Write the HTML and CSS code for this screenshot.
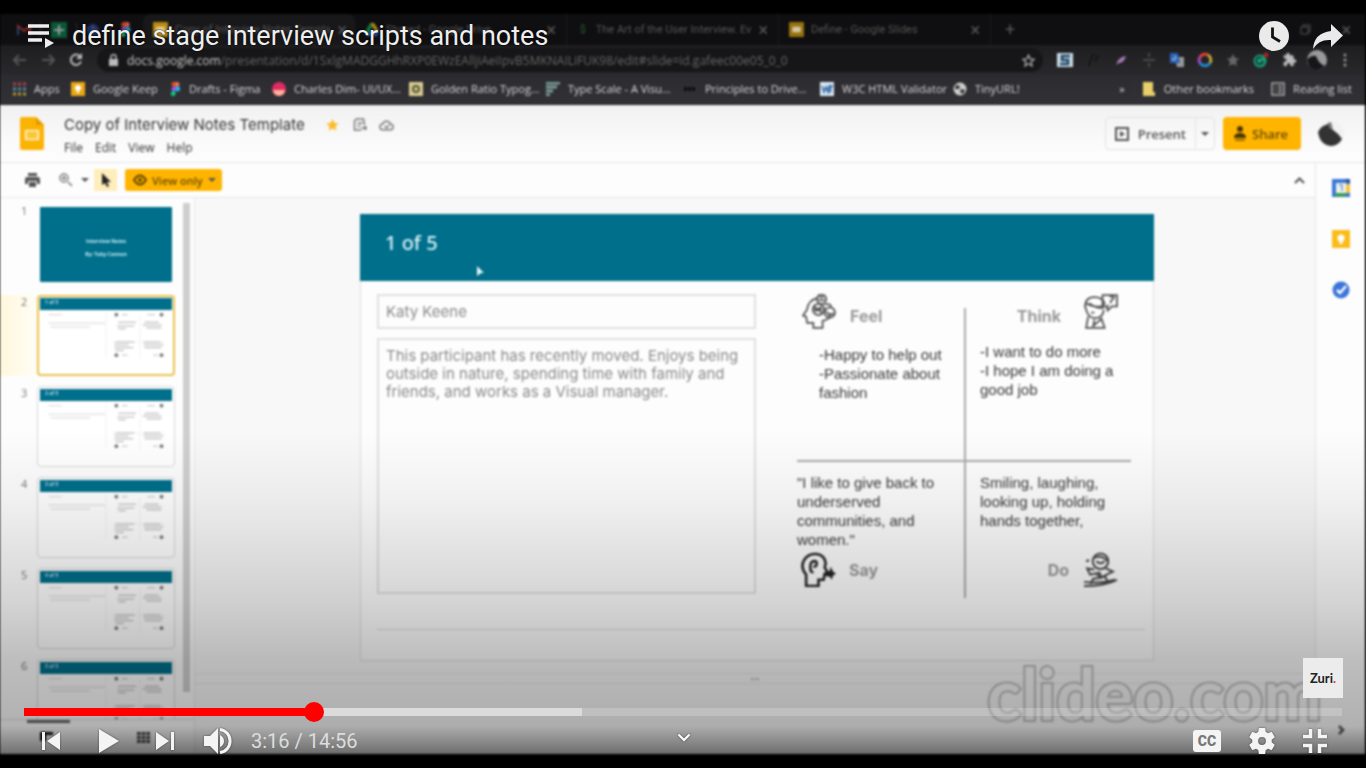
FILE: index.html
```html
<!DOCTYPE html>
<html lang="en">
<head>
<meta charset="utf-8">
<title>define stage interview scripts and notes</title>
<link rel="stylesheet" href="styles.css">
</head>
<body>
<svg class="defs" aria-hidden="true">
  <symbol id="mini" viewBox="0 0 132 68">
    <g fill="none" stroke="#bbb" stroke-width="1">
      <path d="M5 5h14" stroke="#dccfd3"/><path d="M5 14h60M7 18h42" stroke="#d4d4d4"/>
      <path d="M66 3v46M72 34h56M102 6v46" stroke="#f1f1f1"/>
      <path d="M83 5h6M110 5h8M83 48h6M116 48h5" stroke="#bbb"/>
      <path d="M79 13h19M78 17h18M79 20h8M107 13h15M105 16h20M109 19h16M76 34h20M75 37h15M75 40h20M76 43h9M106 34h18M106 37h21M107 40h18" stroke="#aaa"/>
    </g>
    <g fill="#777"><circle cx="77" cy="5" r="2"/><circle cx="125" cy="5" r="2"/><circle cx="77" cy="48" r="2"/><circle cx="125" cy="48" r="2"/></g>
  </symbol>
  <symbol id="slides" viewBox="0 0 16 16"><rect width="16" height="16" rx="1" fill="currentColor"/><path d="M3.500 5h9v6h-9z" fill="#fff" opacity=".6"/></symbol>
  <symbol id="figma" viewBox="0 0 10 14"><path d="M5 0H3a2.400 2.400 0 0 0 0 4.700h2z" fill="#f24e1e"/><path d="M5 0h2a2.400 2.400 0 0 1 0 4.700H5z" fill="#ff7262"/><path d="M5 4.700H3a2.400 2.400 0 0 0 0 4.700h2z" fill="#a259ff"/><circle cx="7.300" cy="7" r="2.400" fill="#1abcfe"/><path d="M5 9.400H3A2.300 2.300 0 1 0 5 12z" fill="#0acf83"/></symbol>
</svg>

<main class="player">
  <div class="video">
    <div class="tabs">
      <div class="pins">
        <svg width="14" height="12" viewBox="0 0 14 12"><path d="M1 11V2l6 5 6-5v9" fill="none" stroke="#a33" stroke-width="2"/><path d="M1 11V4" stroke="#258" stroke-width="2"/></svg>
        <i class="sep"></i>
        <svg width="16" height="16" viewBox="0 0 16 16"><path fill="#0b6a41" d="M0 0h16v16H0z"/><path d="M8 3v10M3 8h10" stroke="#bbb" stroke-width="2"/></svg>
        <i class="sep"></i>
        <svg width="14" height="14" viewBox="0 0 14 14"><circle cx="7" cy="7" r="6" fill="#1a3b86"/><path d="M7 2v5h4" stroke="#a66" fill="none"/></svg>
        <i class="sep"></i>
        <svg width="11" height="15"><use href="#figma"/></svg>
      </div>
      <div class="tab active"><svg class="c-slides" width="15" height="15"><use href="#slides"/></svg><span>Copy of Interview Notes Templa</span><b>×</b></div>
      <div class="tab"><svg width="14" height="13" viewBox="0 0 14 13"><path d="M5 0h4l5 8h-4z" fill="#b58a12"/><path d="M5 0l2 4-5 9-2-4z" fill="#0c7b43"/><path d="M4 8h10l-2 5H2z" fill="#2458b5"/></svg><span>Shared - Google Drive</span><b>×</b></div>
      <div class="tab"><em>$</em><span>The Art of the User Interview. Ev</span><b>×</b></div>
      <div class="tab"><svg class="c-dim" width="15" height="15"><use href="#slides"/></svg><span>Define - Google Slides</span><b>×</b></div>
      <span class="newtab">+</span>
      <div class="win"><span>–</span><svg width="11" height="11" viewBox="0 0 11 11"><path d="M1 3h7v7H1zM3 3V1h7v7H8" fill="none" stroke="#555"/></svg><span>×</span></div>
    </div>

    <div class="address">
      <svg width="14" height="12" viewBox="0 0 14 12"><path d="M13 6H2M6 1L1 6l5 5" fill="none" stroke="#555" stroke-width="2"/></svg>
      <svg width="14" height="12" viewBox="0 0 14 12"><path d="M1 6h11M8 1l5 5-5 5" fill="none" stroke="#555" stroke-width="2"/></svg>
      <svg width="14" height="14" viewBox="0 0 14 14"><path d="M11.500 4A5.200 5.200 0 1 0 12 8.500" fill="none" stroke="#bbb" stroke-width="2"/><path d="M13 0v6H7z" fill="#bbb"/></svg>
      <div class="url">
        <svg width="9" height="12" viewBox="0 0 9 12"><path d="M0 5h9v7H0z" fill="#bbb"/><path d="M2 5V3a2.500 2.500 0 0 1 5 0v2" fill="none" stroke="#bbb" stroke-width="1.500"/></svg>
        <span><strong>docs.google.com</strong>/presentation/d/1SxlgMADGGHhRXP0EWzEAlljiAeiIpvB5MKNAILiFUK98/edit#slide=id.gafeec00e05_0_0</span>
        <svg width="13" height="13" viewBox="0 0 24 24"><path d="M12 2l3 7 7.500.700-5.700 5 1.700 7.300L12 18l-6.500 4 1.700-7.300-5.700-5L9 9z" fill="none" stroke="#aaa" stroke-width="2.500"/></svg>
      </div>
      <div class="exts">
        <svg viewBox="0 0 16 16"><path fill="#c9dce4" d="M0 1h16v14H0z"/><path d="M13 4H5v4h6v4H3" fill="none" stroke="#246" stroke-width="2.500"/></svg>
        <svg viewBox="0 0 16 16"><path d="M4 14L7 4q1-2 3-1M10 10l2-5 2-1" fill="none" stroke="#111" stroke-width="1.500"/></svg>
        <svg viewBox="0 0 16 16"><path d="M3 13Q5 5 13 4q-2 7-7 7z" fill="#a77bb4"/></svg>
        <svg viewBox="0 0 16 16"><path d="M8 1v4M8 11v4M2 8h12" stroke="#555" stroke-width="1.500"/></svg>
        <svg viewBox="0 0 16 16"><path fill="#999" d="M6 5h9v10H8z"/><path fill="#2861b5" d="M1 1h8l2 10H1z"/><path d="M3 6a2 2 0 1 0 2-2" stroke="#cde" fill="none"/></svg>
        <svg viewBox="0 0 16 16"><g fill="none" stroke-width="3"><path d="M3 11a6 6 0 0 1 0-6" stroke="#a4c"/><path d="M3 5a6 6 0 0 1 8-2" stroke="#e43"/><path d="M11 3a6 6 0 0 1 2 8" stroke="#ca3"/><path d="M13 11a6 6 0 0 1-10 0" stroke="#28c"/></g></svg>
        <svg viewBox="0 0 16 16"><path d="M8 2l2 4 4 .500-3 3 1 4.500-4-2-4 2 1-4.500-3-3L6 6z" fill="#666"/></svg>
        <svg viewBox="0 0 16 16"><circle cx="7" cy="9" r="6.500" fill="#16a377"/><path d="M9 6a3.500 3.500 0 1 0 1 4H8" stroke="#223" stroke-width="1.500" fill="none"/><circle cx="13" cy="3" r="2.500" fill="#a22"/></svg>
        <svg viewBox="0 0 24 24"><path d="M20.500 11H19V7a2 2 0 0 0-2-2h-4V3.500a2.500 2.500 0 0 0-5 0V5H4v4.300h1.500a2.700 2.700 0 0 1 0 5.400H4V21h5v-2a2.500 2.500 0 0 1 5 0v2h5v-5h1.500a2.500 2.500 0 0 0 0-5z" fill="#bbb"/></svg>
        <svg class="big" viewBox="0 0 20 20"><circle cx="10" cy="10" r="10" fill="#999"/><path d="M0 10q4-5 9-4 3 8 9 10-9 8-16 0z" fill="#16161a"/></svg>
        <svg viewBox="0 0 16 16"><g fill="#999"><circle cx="8" cy="3" r="1.500"/><circle cx="8" cy="8" r="1.500"/><circle cx="8" cy="13" r="1.500"/></g></svg>
      </div>
    </div>

    <div class="bookmarks">
      <div><svg viewBox="0 0 14 14"><g stroke-width="3" stroke-dasharray="3 2"><path d="M1 2h13" stroke="#a44"/><path d="M1 7h13" stroke="#58a"/><path d="M1 12h13" stroke="#a93"/></g></svg>Apps</div>
      <div><svg viewBox="0 0 14 14"><path fill="#e9a813" d="M0 0h14v14H0z"/><circle cx="7" cy="6" r="3" fill="#fff"/><path fill="#fff" d="M6 9h2v2H6z"/></svg>Google Keep</div>
      <div><svg class="slim" viewBox="0 0 10 14"><use href="#figma"/></svg>Drafts - Figma</div>
      <div><svg viewBox="0 0 14 14"><circle cx="7" cy="7" r="7" fill="#e22a63"/><path d="M1 8h12a6 6 0 0 1-12 0z" fill="#ffb199"/></svg>Charles Dim- UI/UX…</div>
      <div><svg viewBox="0 0 14 14"><path fill="#d8cb92" d="M0 0h14v14H0z"/><circle cx="7" cy="7" r="3" fill="none" stroke="#553" stroke-width="2"/></svg>Golden Ratio Typog…</div>
      <div><svg viewBox="0 0 14 14"><path d="M0 1h14M0 5h11M0 9h7M0 13h4" stroke="#7b9a97" stroke-width="3"/></svg>Type Scale - A Visu…</div>
      <div><svg viewBox="0 0 14 14"><path d="M1 7h12" stroke="#0c0c10" stroke-width="4" stroke-dasharray="3 1"/></svg>Principles to Drive…</div>
      <div><svg viewBox="0 0 14 14"><path fill="#dbe7f2" d="M0 0h14v14H0z"/><path d="M2 4l2 6 2-5 2 5 1-6h3l-2 3q2 3-1 3" fill="none" stroke="#2b62a5" stroke-width="1.500"/></svg>W3C HTML Validator</div>
      <div><svg viewBox="0 0 14 14"><circle cx="7" cy="7" r="6.500" fill="#ccc"/><path d="M3 3l4 1-1 3-4 0M8 7l4 1-2 4-3-2z" fill="#333"/></svg>TinyURL!</div>
      <div class="end"><span>»</span><i class="sep"></i><svg viewBox="0 0 14 14"><path fill="#e8cf6a" d="M1 0h10v10h2v4H1z"/></svg>Other bookmarks<i class="sep"></i><svg viewBox="0 0 14 14"><path d="M1 1h12v12H1zM4 4h1M7 4h4M4 7h1M7 7h4M4 10h1M7 10h4" fill="none" stroke="#aaa" stroke-width="1.500"/></svg>Reading list</div>
    </div>

    <header class="dochead">
      <svg class="logo" viewBox="0 0 24 33"><path d="M2 0h14l8 8v23a2 2 0 0 1-2 2H2a2 2 0 0 1-2-2V2a2 2 0 0 1 2-2z" fill="#fbb303"/><path d="M16 0l8 8h-8z" fill="#e69a00"/><path d="M6 14h12v8H6z" fill="none" stroke="#ffe9a8" stroke-width="2.500"/><path d="M8 17h8v2H8z" fill="#fcd264"/></svg>
      <div class="names">
        <div class="doctitle"><span>Copy of Interview Notes Template</span>
          <svg viewBox="0 0 14 14"><path d="M7 1l2 4 4 .500-3 3 .800 4L7 10.500 3.200 12.500l.800-4-3-3L5 5z" fill="#f9bd2c"/></svg>
          <svg viewBox="0 0 14 14"><path d="M9 12H2V3l2-2h7l1 6M5 5h5M5 8h3M9 10h5M12 8l2 2-2 2" fill="none" stroke="#777" stroke-width="1.500"/></svg>
          <svg viewBox="0 0 16 14"><path d="M4 12a3 3 0 0 1 0-6q1-3 4-3t4 3a3 3 0 0 1 0 6zM6 8l2 2 3-3" fill="none" stroke="#777" stroke-width="1.500"/></svg>
        </div>
        <nav class="menu"><button>File</button><button>Edit</button><button>View</button><button>Help</button></nav>
      </div>
      <div class="present"><button><svg width="14" height="14" viewBox="0 0 14 14"><path d="M1 1h12v12H1z" fill="none" stroke="#555" stroke-width="2"/><path d="M5 4l5 3-5 3z" fill="#555"/></svg>Present</button><button class="drop" aria-label="Present options"><i class="caret"></i></button></div>
      <button class="share"><svg width="12" height="15" viewBox="0 0 12 15"><circle cx="6" cy="3" r="3" fill="#4a3500"/><path d="M0 12q0-5 6-5t6 5z" fill="#4a3500"/><path d="M1 14h10" stroke="#7c5800" stroke-width="1.500"/></svg>Share</button>
      <svg class="avatar" viewBox="0 0 28 28"><circle cx="14" cy="14" r="13" fill="#f1f1f1"/><path d="M1 12q3-6 8-7l3-2q0 5 4 7 5 3 9 9-4 7-11 7Q3 25 1 12z" fill="#333"/><path d="M11 3l3-1 2 8-4-2z" fill="#777"/></svg>
    </header>

    <div class="work">
      <section class="editor">
        <div class="toolbar">
          <svg width="15" height="14" viewBox="0 0 15 14"><path d="M3 0h9v3H3zM2 4h11q2 0 2 2v5h-3V8H3v3H0V6q0-2 2-2zM4 9h7v5H4z" fill="#555"/></svg>
          <svg class="mag" width="14" height="14" viewBox="0 0 14 14"><path d="M9 9l4 4M3 5h4M5 3v4" stroke="#777" stroke-width="1.500"/><circle cx="5" cy="5" r="4" fill="none" stroke="#777" stroke-width="1.500"/></svg>
          <i class="caret"></i>
          <span class="pick"><svg width="10" height="14" viewBox="0 0 10 14"><path d="M1 0l9 9H6l2 4-2 1-2-4-3 2z" fill="#222"/></svg></span>
          <button class="viewonly"><svg width="14" height="12" viewBox="0 0 14 12"><path d="M1 6q6-9 12 0-6 9-12 0z" fill="none" stroke="#5c4200" stroke-width="2"/><circle cx="7" cy="6" r="2" fill="#5c4200"/></svg>View only<i class="caret"></i></button>
          <svg class="fold" width="11" height="7" viewBox="0 0 11 7"><path d="M1 6l4.500-4.500L10 6" fill="none" stroke="#555" stroke-width="2"/></svg>
        </div>
        <div class="panes">
          <aside class="film">
            <div class="filmlist">
              <ol>
                <li><span>1</span><div class="thumb cover"><p>Interview Notes</p><p>By: Toby Cannon</p></div></li>
                <li class="sel"><span>2</span><div class="thumb"><b>1 of 5</b><svg><use href="#mini"/></svg></div></li>
                <li><span>3</span><div class="thumb"><b>2 of 5</b><svg><use href="#mini"/></svg></div></li>
                <li><span>4</span><div class="thumb"><b>3 of 5</b><svg><use href="#mini"/></svg></div></li>
                <li><span>5</span><div class="thumb"><b>4 of 5</b><svg><use href="#mini"/></svg></div></li>
                <li><span>6</span><div class="thumb"><b>5 of 5</b><svg><use href="#mini"/></svg></div></li>
              </ol>
              <div class="scroll"></div>
            </div>
            <div class="filmfoot"><i class="hbar"></i><svg width="13" height="9" viewBox="0 0 13 9"><path d="M0 0h13v3H6v6H0z" fill="#111"/></svg><svg width="13" height="11" viewBox="0 0 13 11"><path d="M0 1.500h13M0 5.500h13M0 9.500h13" stroke="#444" stroke-width="3" stroke-dasharray="3.700 1"/></svg></div>
          </aside>
          <div class="canvas">
            <article class="slide">
              <h1>1 of 5</h1>
              <svg class="pointer" width="9" height="12" viewBox="0 0 9 12"><path d="M1 1l7 7H5l-4 3z" fill="#e6f4f8"/></svg>
              <div class="content">
                <div class="person"><p class="box name">Katy Keene</p><p class="box bio">This participant has recently moved. Enjoys being outside in nature, spending time with family and friends, and works as a Visual manager.</p></div>
                <div class="map">
                  <section class="q feel"><h2><svg viewBox="0 0 34 34"><g fill="none" stroke="#505050" stroke-width="1.700"><path d="M15 4Q6 6 5 15l-4 6 3 1 1 6h6v5h9v-7q7-1 8-7"/><circle cx="19" cy="5" r="4.500"/><path d="M16 6h6M17 3h4"/><circle cx="16" cy="15" r="5.500"/><path d="M12 12l8 7M13 17l6-5M11 15h9"/><circle cx="27" cy="18" r="5"/><path d="M24 17l2 3 5-1M22 10q7-1 6 3"/></g></svg>Feel</h2><p>-Happy to help out<br>-Passionate about fashion</p></section>
                  <section class="q think"><h2>Think<svg viewBox="0 0 34 34"><g fill="none" stroke="#505050" stroke-width="1.700"><path d="M2 13Q2 3 11 3q8 0 10 6l-3 3q-9 1-15-3M2 12l2 6q3 7 11 5 5-2 5-8M6 9q8 6 14 4M5 22l-2 11h18l-3-9-8 7 1-6M8 18h3M22 13l3-2M19 1h14v11h-5l-4 4-1-4h-4zM26 3q4-2 4 1l-3 3v2"/></g></svg></h2><p>-I want to do more<br>-I hope I am doing a good job</p></section>
                  <section class="q say"><p>"I like to give back to underserved communities, and women."</p><h2><svg viewBox="0 0 34 34"><path d="M5 33V22Q-1 15 3 8q4-7 12-6 8 1 9 9l-1 4 3 5-3 1-1 6h-5v6zM15 9q-6-1-6 5 0 7 3 5M15 9q1 6-3 5" fill="none" stroke="#222" stroke-width="2.500"/><path d="M22 23l6-5 1-4 2 5 3 2-3 2-1 4-2-3z" fill="#222"/></svg>Say</h2></section>
                  <section class="q do"><p>Smiling, laughing, looking up, holding hands together,</p><h2>Do<svg viewBox="0 0 34 34"><g fill="none" stroke="#444" stroke-width="1.900"><circle cx="17" cy="9" r="7.500"/><path d="M10 6q8-4 14 3M13 9q4 4 8 0M6 8l-3 1M11 17l-7-1 3 6 9-2 2 5-8 1-3 5M22 16l7 3-8 4 4 8M13 22q7 4 10 0M1 33q20 0 32-6M1 29q17 2 30-2"/></g></svg></h2></section>
                </div>
              </div>
              <hr>
            </article>
            <div class="notes"><span>•••</span></div>
          </div>
        </div>
      </section>
      <aside class="side">
        <svg viewBox="0 0 18 18"><path d="M0 0h18v18H0z" fill="#3b78d8"/><path d="M12 0h6v5z" fill="#1f4fa3"/><path d="M4 4h10v10H4z" fill="#eef4e8"/><path d="M14 5h4v9h-4z" fill="#f6c33c"/><path d="M3 14h11v4H3z" fill="#3a9b62"/><path d="M7 6h3v6" stroke="#6b9be0" stroke-width="1.500" fill="none"/></svg>
        <svg viewBox="0 0 18 18"><path d="M0 0h18v18H0z" fill="#fbbc1a"/><circle cx="9" cy="8" r="3.500" fill="#fff"/><path d="M7.500 11h3v3h-3z" fill="#fff"/></svg>
        <svg viewBox="0 0 18 18"><circle cx="9" cy="9" r="8.500" fill="#3c74d8"/><path d="M5 9l3 3 6-7" fill="none" stroke="#fff" stroke-width="2.500"/></svg>
        <svg class="last" viewBox="0 0 18 18"><path d="M7 5l4 4-4 4" fill="none" stroke="#555" stroke-width="2.500"/></svg>
      </aside>
    </div>
    <div class="mark">clideo.com</div>
  </div>

  <div class="overlay">
    <div class="top">
      <button aria-label="Playlist"><svg width="27" height="25" viewBox="0 0 27 25"><path d="M0 2h21M0 9h21M0 16h14" stroke="#eee" stroke-width="3.500"/><path d="M17 14l9 5-9 5z" fill="#eee"/></svg></button>
      <a href="#">define stage interview scripts and notes</a>
      <button class="later" aria-label="Watch later"><svg width="30" height="30" viewBox="0 0 30 30"><circle cx="15" cy="15" r="15" fill="#eaeaea"/><path d="M13.500 6.500v9.500l7.500 4.500" fill="none" stroke="#111" stroke-width="2.800"/></svg></button>
      <button aria-label="Share"><svg width="30" height="25" viewBox="0 0 30 25"><path d="M18 0l12 11.500L18 23v-7Q6 15 0 25 1 9 18 7z" fill="#eaeaea"/></svg></button>
    </div>
    <a class="brand" href="#">Zuri<b>.</b></a>
    <input class="seek" type="range" min="0" max="896" value="193" aria-label="Seek">
    <div class="controls">
      <div class="left">
        <button aria-label="Previous"><svg width="20" height="20" viewBox="0 0 20 20"><path d="M1 1h3v18H1zM19 1v18L6 10z"/></svg></button>
        <button class="play" aria-label="Play"><svg width="20" height="26" viewBox="0 0 20 26"><path d="M0 1l20 12L0 25z"/></svg></button>
        <button class="next" aria-label="Next"><svg width="20" height="20" viewBox="0 0 20 20"><path d="M1 1v18l13-9zM16 1h3v18h-3z"/></svg></button>
        <button class="vol" aria-label="Volume"><svg width="28" height="28" viewBox="0 0 28 28"><path d="M0 9h6l8-8v26l-8-8H0zM16 8q4 2 4 6t-4 6z"/><path d="M16 2.500a11.600 11.600 0 0 1 0 23" fill="none" stroke="#f4f4f4" stroke-width="3"/></svg></button>
        <span class="time">3:16 / 14:56</span>
      </div>
      <button class="more" aria-label="More videos"><svg width="14" height="9" viewBox="0 0 14 9"><path d="M1.500 1.500L7 7l5.500-5.500" fill="none" stroke="#fff" stroke-width="2"/></svg></button>
      <div class="right">
        <button class="cc" aria-label="Subtitles">CC</button>
        <button aria-label="Settings"><svg width="26" height="26" viewBox="2 2 20 20"><path fill-rule="evenodd" d="M19.430 12.980c.040-.320.070-.640.070-.980s-.030-.660-.070-.980l2.110-1.650c.190-.150.240-.420.120-.640l-2-3.460c-.120-.220-.390-.300-.610-.220l-2.490 1c-.520-.400-1.080-.730-1.690-.980l-.380-2.650C14.460 2.180 14.250 2 14 2h-4c-.250 0-.460.180-.490.420l-.380 2.650c-.610.250-1.170.590-1.690.980l-2.490-1c-.230-.090-.490 0-.610.220l-2 3.460c-.130.220-.070.490.120.640l2.110 1.650c-.040.320-.070.650-.070.980s.030.660.070.980l-2.110 1.650c-.190.150-.240.420-.120.640l2 3.460c.120.220.390.300.610.220l2.490-1c.520.400 1.080.730 1.690.980l.380 2.650c.030.240.240.420.490.420h4c.250 0 .460-.180.490-.420l.380-2.650c.610-.250 1.170-.590 1.690-.980l2.490 1c.230.090.490 0 .610-.220l2-3.460c.120-.220.070-.490-.120-.640zM12 15a3 3 0 1 1 0-6 3 3 0 0 1 0 6z"/></svg></button>
        <button aria-label="Exit full screen"><svg width="24" height="24" viewBox="0 0 24 24"><path d="M0 7.500h7.500V0M16.500 0v7.500H24M0 16.500h7.500V24M24 16.500h-7.500V24" fill="none" stroke="#f4f4f4" stroke-width="3.500"/></svg></button>
      </div>
    </div>
  </div>
</main>
</body>
</html>
```

FILE: styles.css
```css
* { box-sizing: border-box; }
body { margin: 0; background: #fff; font-family: "Open Sans", sans-serif; }
button { border: 0; padding: 0; margin: 0; background: none; font: inherit; color: inherit; display: flex; align-items: center; }
p, h1, h2, ol { margin: 0; padding: 0; }
svg { flex: none; display: block; }
.defs { width: 0; height: 0; position: absolute; }

.player { display: grid; grid-template: 100% / 100%; height: calc(100vh - 12px); background: #000; overflow: hidden; }
.video, .overlay { grid-area: 1 / 1; min-width: 0; display: flex; flex-direction: column; }
.video { position: relative; margin: 14px 1px 14px 0; background: #fdfdfd; overflow: hidden; filter: blur(0.8px); }

/* browser chrome */
.tabs { display: flex; align-items: center; height: 31px; background: #0f0f11; color: #555; font: 11px/16px Roboto, sans-serif; }
.pins { display: flex; align-items: center; justify-content: space-between; width: 143px; padding: 0 12px 0 17px; opacity: 0.8; }
.sep { width: 1px; height: 14px; background: #333; }
.tab { display: flex; align-items: center; gap: 7px; width: 212px; height: 100%; padding: 0 10px; border-right: 1px solid #1c1c1e; }
.tab.active { background: #18181a; border-radius: 8px 8px 0 0; }
.tab span { flex: 1; white-space: nowrap; }
.tab b, .win span, .newtab { font-weight: 400; font-size: 18px; line-height: 18px; }
.tab em { width: 14px; text-align: center; color: #265c2c; font-style: normal; }
.c-slides { color: #b98a10; }
.c-dim { color: #94700f; }
.newtab { margin-left: 14px; }
.win { margin-left: auto; display: flex; align-items: center; gap: 30px; padding-right: 14px; }

.address { display: flex; align-items: center; gap: 14px; height: 30px; padding: 0 12px 0 13px; background: linear-gradient(#1e1e21, #29292c); }
.url { flex: 1; min-width: 0; display: flex; align-items: center; gap: 9px; height: 24px; padding: 0 8px 0 12px; border-radius: 12px; background: #161618; color: #666; font-size: 12px; }
.url span { flex: 1; white-space: nowrap; overflow: hidden; }
.url strong { font-weight: 400; color: #ccc; }
.exts { display: flex; align-items: center; gap: 12px; }
.exts svg { width: 16px; height: 16px; }
.exts .big { width: 20px; height: 20px; margin: 0 -2px; }

.bookmarks { display: grid; grid-template-columns: 59px 99px 102px 137px 137px 137px 137px 133px 1fr auto; align-items: center; height: 30px; padding: 0 13px 2px 12px; background: linear-gradient(#2c2c30, #323236); color: #d8d8d8; font-size: 11px; border-bottom: 1px solid #222; }
.bookmarks div { display: flex; align-items: center; gap: 8px; white-space: nowrap; }
.bookmarks svg { width: 14px; height: 14px; }
.bookmarks .slim { width: 11px; }

/* document header */
.dochead { display: flex; align-items: center; height: 58px; padding: 0 20px; background: linear-gradient(#f1f1f1, #fbfbfb 70%, #fdfdfd); border-bottom: 1px solid #e6e6e6; color: #333; }
.logo { width: 24px; height: 33px; }
.names { flex: 1; padding: 4px 0 0 20px; }
.doctitle { display: flex; align-items: center; gap: 12px; font: 15px/24px Inter, sans-serif; }
.doctitle span { margin-right: 8px; }
.doctitle svg { width: 15px; height: 14px; }
.menu { display: flex; gap: 12px; font-size: 12px; line-height: 22px; }
.present { display: flex; height: 33px; border: 1px solid #e2e2e2; border-radius: 4px; font-size: 13px; font-weight: 600; color: #555; }
.present button { gap: 9px; padding: 0 9px; }
.present .drop { padding: 0 5px; border-left: 1px solid #e2e2e2; }
.caret { border: 4px solid transparent; border-top-color: #555; border-bottom: 0; }
.share { gap: 6px; width: 78px; height: 33px; margin: 0 16px 0 8px; padding-left: 11px; border-radius: 4px; background: #ffb400; color: #6b4d00; font-size: 13px; font-weight: 600; }
.avatar { width: 28px; height: 28px; }

/* workspace */
.work { flex: 1; min-height: 0; display: flex; }
.editor { flex: 1; min-width: 0; display: flex; flex-direction: column; border-right: 1px solid #e6e6e6; }
.toolbar { display: flex; align-items: center; height: 35px; padding: 0 10px 0 25px; border-bottom: 1px solid #e8e8e8; }
.toolbar .mag { margin: 0 8px 0 19px; }
.pick { display: grid; place-items: center; width: 23px; height: 22px; margin: 0 8px 0 5px; background: #fdeebb; }
.viewonly { gap: 5px; height: 22px; padding: 0 6px 0 8px; border-radius: 3px; background: #ffb400; color: #6b4d00; font-size: 11px; font-weight: 600; }
.fold { margin-left: auto; }
.panes { flex: 1; min-height: 0; display: flex; }
.film { width: 195px; display: flex; flex-direction: column; border-right: 1px solid #e8e8e8; }
.filmlist { flex: 1; min-height: 0; display: flex; justify-content: space-between; overflow: hidden; padding-right: 4px; }
.film ol { list-style: none; padding-top: 6px; }
.film li { display: flex; height: 81px; margin-bottom: 10px; color: #777; font-size: 11px; line-height: 14px; }
.film li > span { width: 37px; padding-left: 21px; }
.thumb { width: 138px; height: 81px; border: 1px solid #d8d8d8; border-radius: 4px; padding: 2px; overflow: hidden; background: #fff; }
.thumb b { display: block; height: 12px; padding-left: 5px; background: #006f8b; color: #bde; font-size: 5px; line-height: 8px; }
.thumb svg { width: 132px; height: 64px; }
.cover { border-color: transparent; background: #006f8b content-box; color: #c8eef5; text-align: center; font-size: 5px; font-weight: 700; }
.cover p { line-height: 13px; }
.cover p:first-child { padding-top: 28px; }
.sel { background: linear-gradient(90deg, #fff7dc, #fffdf6 37px, transparent 37px); }
.sel .thumb { border: 2px solid #eac14c; padding: 1px; }
.scroll { width: 7px; height: 489px; margin-top: 5px; background: #cfcfcf; }
.filmfoot { position: relative; display: flex; gap: 84px; height: 35px; padding: 12px 0 0 40px; border-top: 1px solid #ddd; }
.hbar { position: absolute; top: 0; left: 27px; width: 43px; height: 3px; background: #666; }
.canvas { flex: 1; min-width: 0; display: flex; flex-direction: column; background: #f8f8f8; }
.slide { position: relative; flex: none; height: 447px; margin: 16px 161px 0 165px; background: #fdfdfd; border: 1px solid #ddd; border-top: 0; }
.slide h1 { height: 67px; margin: 0 -1px; padding-left: 25px; background: #006f8b; color: #d6f1f7; font: 500 20px/58px "Noto Sans", sans-serif; }
.pointer { position: absolute; left: 115px; top: 51px; }
.content { display: flex; justify-content: space-between; padding: 13px 22px 0 16px; }
.person { width: 379px; color: #8a8a8a; font: 15px/18px Inter, sans-serif; }
.box { border: 2px solid #e0e0e0; padding: 7px; }
.name { height: 35px; margin-bottom: 9px; }
.bio { height: 256px; }
.map { position: relative; display: grid; grid-template: 168px 136px / 168px 166px; font: 15px/19px "Liberation Sans", sans-serif; color: #383838; }
.map::before, .map::after { content: ""; position: absolute; background: #aaa; }
.map::before { left: 167px; top: 14px; width: 2px; height: 290px; }
.map::after { left: 0; top: 166px; width: 334px; height: 2px; }
.q h2 { display: flex; align-items: flex-end; gap: 13px; font: 700 16px/26px Inter, sans-serif; color: #999; }
.q h2 svg { width: 35px; height: 35px; }
.feel h2 { padding-left: 5px; }
.feel p { padding: 16px 0 0 22px; }
.think h2, .do h2 { justify-content: flex-end; padding-right: 13px; gap: 22px; }
.think p { padding: 13px 0 0 15px; }
.say p { padding: 11px 20px 0 0; height: 90px; }
.say h2 { padding-left: 4px; }
.do p { height: 90px; padding: 11px 10px 0 15px; }
.say h2, .do h2 { align-items: center; }
.do h2 { gap: 14px; }
.slide hr { height: 1px; margin: 31px 8px 0 16px; border: 0; background: #d8d8d8; }
.notes { flex: 1; margin-top: 12px; border-top: 1px solid #e6e6e6; text-align: center; color: #999; font-size: 8px; line-height: 9px; }
.notes span { display: block; border-bottom: 1px solid #e6e6e6; }
.side { width: 49px; display: flex; flex-direction: column; align-items: center; gap: 33px; padding: 16px 0 15px; }
.side svg { width: 18px; height: 18px; }
.side .last { margin-top: auto; }
.mark { position: absolute; right: 43px; bottom: 21px; color: #f6f6f6; font: 700 70px/80px Lato, sans-serif; -webkit-text-stroke: 4px #bdbdbd; paint-order: stroke; }

/* player controls */
.overlay { position: relative; z-index: 1; color: #f4f4f4; background: linear-gradient(transparent 430px, rgba(0,0,0,0.05) 500px, rgba(0,0,0,0.16) 600px, rgba(0,0,0,0.25) 660px, rgba(0,0,0,0.3) 726px, rgba(0,0,0,0.43) 740px, rgba(0,0,0,0.58) 756px); }
.top { display: flex; align-items: center; height: 72px; padding: 0 23px 0 28px; }
.top a { flex: 1; margin-left: 17px; color: #eee; font: 27px/36px Roboto, sans-serif; text-decoration: none; text-shadow: 0 0 2px #000; }
.later { margin-right: 24px; }
.brand { display: grid; grid-template-columns: auto auto; place-content: center; width: 40px; height: 40px; margin: auto 23px 4px auto; background: #ececec; color: #222; font: 700 13px/16px Lato, sans-serif; text-decoration: none; }
.brand b { color: #e5483e; }
.seek { -webkit-appearance: none; appearance: none; display: block; height: 20px; margin: 0 24px; background: none; }
.seek::-webkit-slider-runnable-track { height: 8px; background: linear-gradient(90deg, #f00 22%, rgba(255,255,255,0.55) 22%, rgba(255,255,255,0.55) 42.3%, rgba(255,255,255,0.2) 42.3%); }
.seek::-webkit-slider-thumb { -webkit-appearance: none; width: 20px; height: 20px; margin-top: -6px; border-radius: 50%; background: #f00; }
.controls { display: flex; align-items: center; height: 46px; padding: 0 39px 8px 41px; }
.controls svg { fill: #f4f4f4; filter: drop-shadow(0 0 1px rgba(0,0,0,0.5)); }
.left, .right { flex: 1; display: flex; align-items: center; }
.right { justify-content: flex-end; gap: 28px; }
.play { margin-left: 38px; }
.next { margin-left: 36px; }
.vol { margin-left: 29px; }
.time { margin-left: 19px; color: #ddd; font: 20px/24px Roboto, sans-serif; }
.more { margin-bottom: 8px; }
.cc { justify-content: center; width: 28px; height: 22px; border-radius: 3px; background: #f4f4f4; color: #777; font: 900 14px/22px Roboto, sans-serif; }
```
